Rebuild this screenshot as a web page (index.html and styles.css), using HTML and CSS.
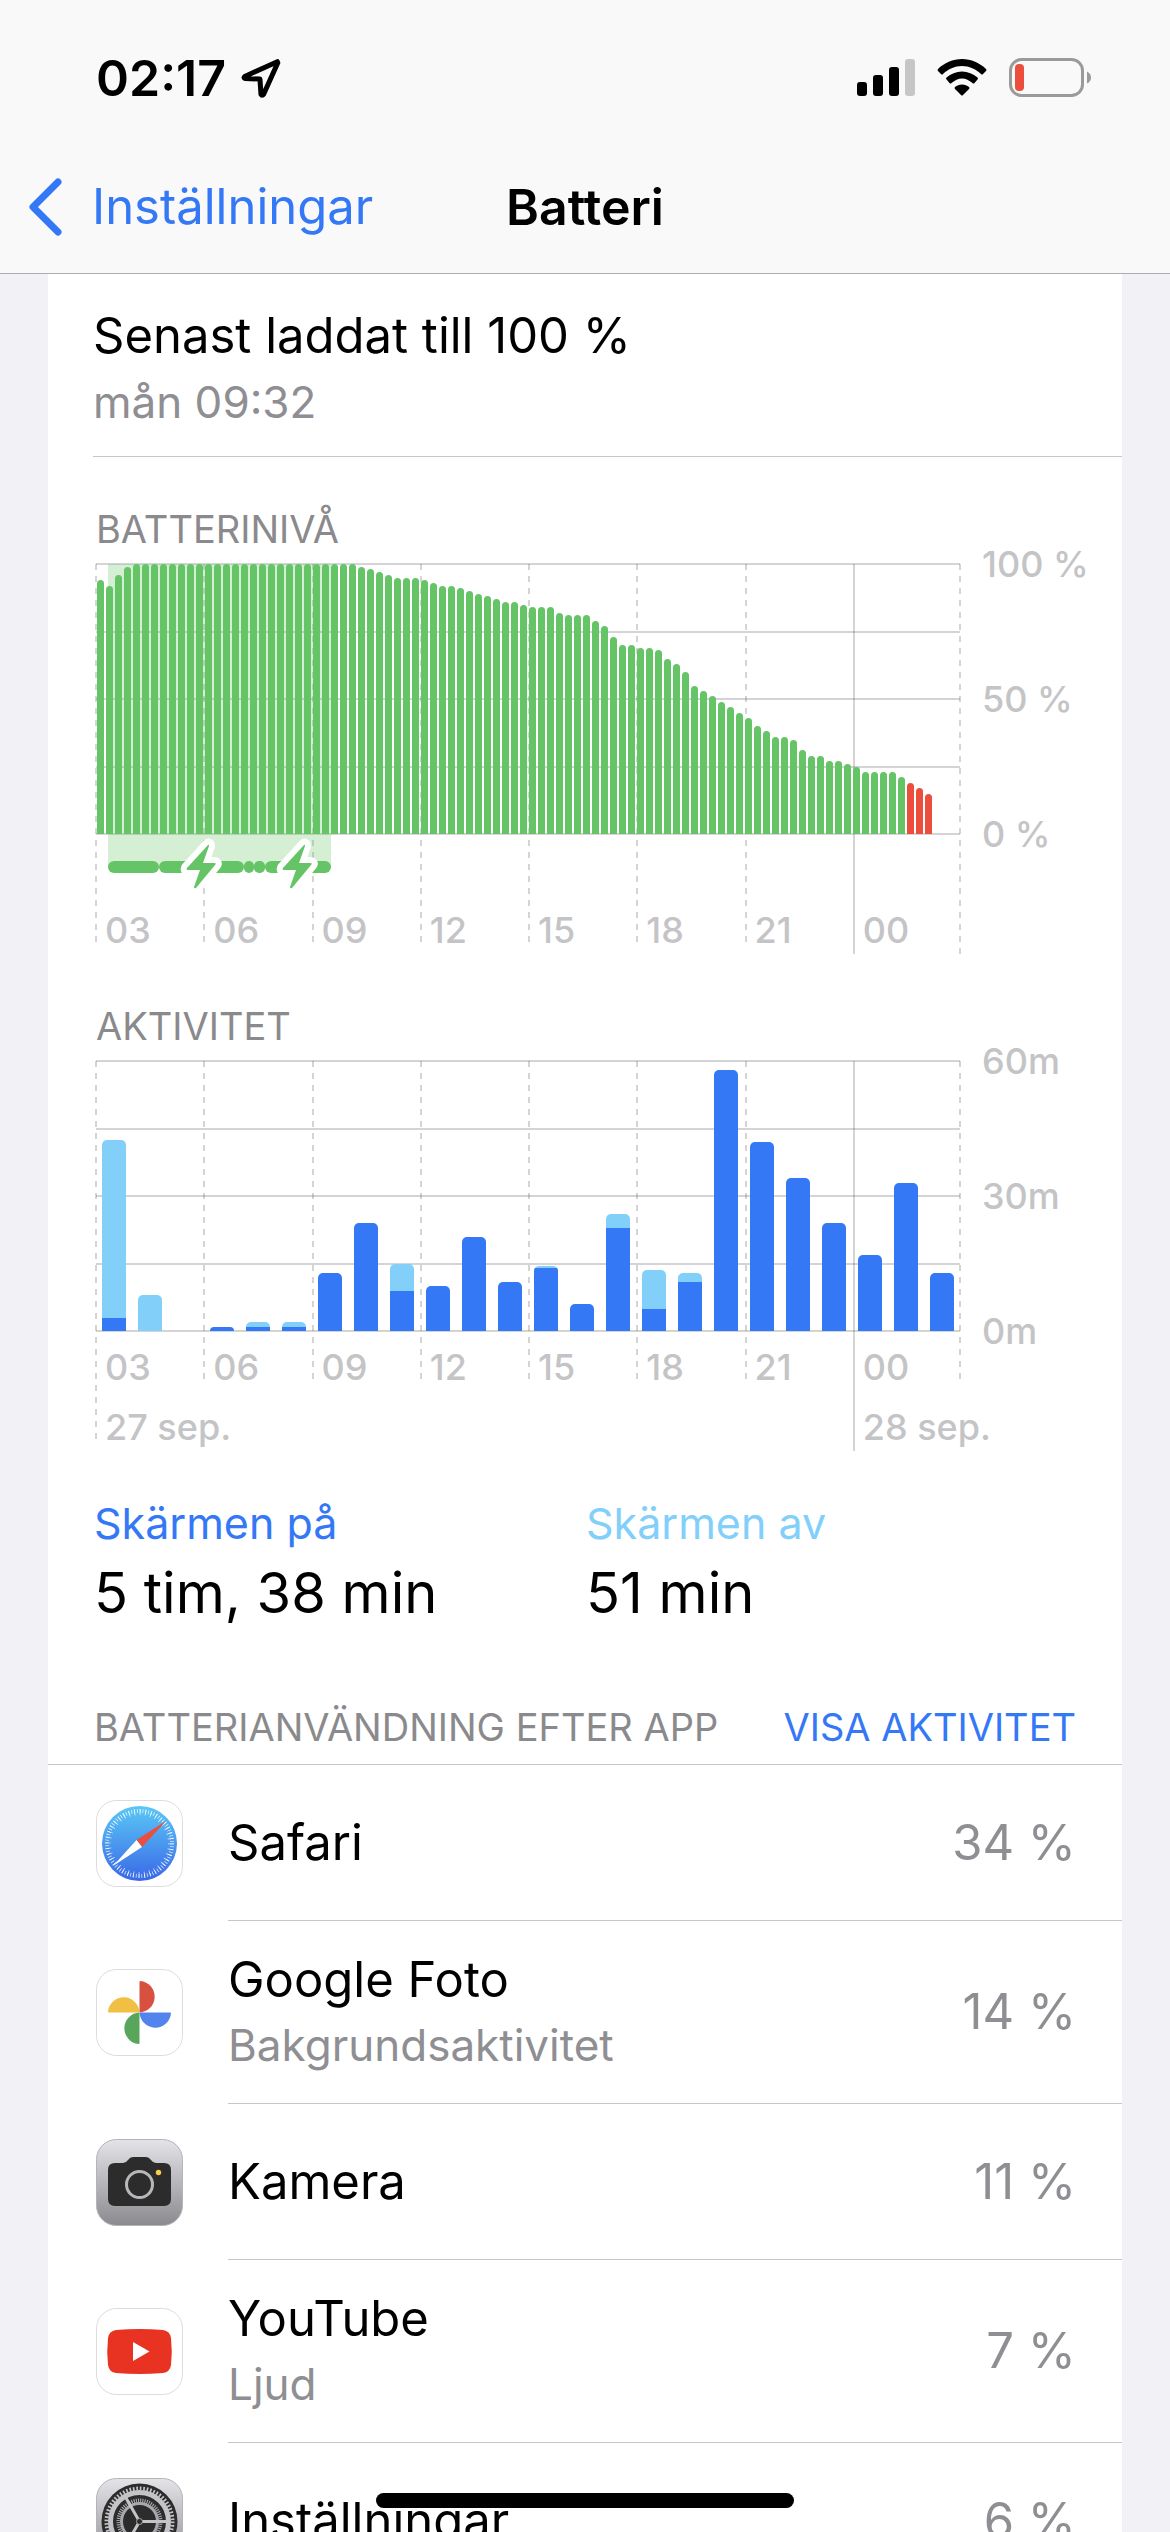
FILE: index.html
```html
<!DOCTYPE html>
<html lang="sv">
<head>
  <meta charset="UTF-8" />
  <meta name="viewport" content="width=device-width, initial-scale=1.0"/>
  <title>Batteri</title>
  <link rel="stylesheet" href="styles.css">
</head>
<body>
  <header class="top">
    <div class="status">
      <div class="status-left">
        <span class="clock">02:17</span>
        <svg class="location" viewBox="0 0 40 40" aria-hidden="true"><path d="M35.500 4.500 L4.500 18.500 Q3 20 5 20.500 L19 21 L20 35.500 Q21 37.500 22.500 35.500 L36 5.500 Z" fill="none" stroke="#000" stroke-width="4.800" stroke-linejoin="round"/></svg>
      </div>
      <div class="status-right">
        <svg class="signal" viewBox="0 0 58 38" aria-hidden="true">
          <rect x="0" y="23" width="10" height="14" rx="3"/>
          <rect x="16" y="16" width="10" height="21" rx="3"/>
          <rect x="32" y="8" width="10" height="29" rx="3"/>
          <rect x="48" y="0" width="10" height="37" rx="3" fill="#c6c6c8"/>
        </svg>
        <svg class="wifi" viewBox="0 0 50 38" aria-hidden="true">
          <path d="M25 0 C34 0 43 4 49 10 Q50 11 49 12 L46 15 Q45 16 44 15 C39 10 32 7 25 7 C18 7 11 10 6 15 Q5 16 4 15 L1 12 Q0 11 1 10 C7 4 16 0 25 0 Z"/>
          <path d="M25 12.500 C31 12.500 36 15 40.500 18.500 Q41.500 19.500 40.500 20.500 L37.500 24 Q36.500 25 35.500 24 C32 21.500 29 19.500 25 19.500 C21 19.500 18 21.500 14.500 24 Q13.500 25 12.500 24 L9.500 20.500 Q8.500 19.500 9.500 18.500 C14 15 19 12.500 25 12.500 Z"/>
          <path d="M25 25.500 C28 25.500 30 26.500 32 28 Q33 29 32 30 L26 36 Q25 37 24 36 L18 30 Q17 29 18 28 C20 26.500 22 25.500 25 25.500 Z"/>
        </svg>
        <svg class="battery" viewBox="0 0 82 40" aria-hidden="true">
          <rect x="1.500" y="1.500" width="72" height="36" rx="11" fill="none" stroke="#9a9a9b" stroke-width="3"/>
          <path d="M78 13.500 Q82 15.500 82 19.500 Q82 23.500 78 25.500 Z" fill="#9a9a9b"/>
          <rect x="6" y="6" width="9" height="27" rx="4" fill="#eb4e3d"/>
        </svg>
      </div>
    </div>
    <nav class="nav">
      <a class="back" href="#">
        <svg viewBox="0 0 34 58" aria-hidden="true"><path d="M30 4 L5 29 L30 54" fill="none" stroke="#3478f6" stroke-width="7" stroke-linecap="round" stroke-linejoin="round"/></svg>
        Inställningar
      </a>
      <h1>Batteri</h1>
    </nav>
  </header>

  <main class="card">
    <section class="last-charge">
      <p class="title">Senast laddat till 100 %</p>
      <p class="sub">mån 09:32</p>
    </section>

    <section class="chart-block">
      <h2>BATTERINIVÅ</h2>
      <div class="chart level">
        <div class="area">
          <div class="grid-lines"><i></i><i></i><i></i><i></i><i></i></div>
          <div class="hours">
            <span>03</span><span>06</span><span>09</span><span>12</span><span>15</span><span>18</span><span>21</span><span class="midnight">00</span>
          </div>
          <div class="charging"></div>
          <div class="bars" id="levelBars"></div>
          <svg class="charge-line" viewBox="0 0 864 60" aria-hidden="true">
            <g fill="#65c466">
              <rect x="12" y="22" width="51" height="12" rx="6"/>
              <rect x="63" y="22" width="85" height="12" rx="6"/>
              <rect x="148" y="22" width="10" height="12" rx="5"/>
              <rect x="158" y="22" width="11" height="12" rx="5"/>
              <rect x="169" y="22" width="66" height="12" rx="6"/>
            </g>
            <g fill="#65c466" stroke-linejoin="round">
              <path id="bolt" d="M112 6 L91 29 Q90 31 92 31 L104 31 L98 48 Q98 50 100 49 L119 26 Q121 24 118 24 L107 24 L113 7 Q113 5 112 6 Z" stroke="#fff" stroke-width="12" paint-order="stroke"/>
              <use href="#bolt" x="96"/>
            </g>
          </svg>
        </div>
        <div class="scale"><span>100 %</span><span>50 %</span><span>0 %</span></div>
      </div>
    </section>

    <section class="chart-block">
      <h2>AKTIVITET</h2>
      <div class="chart activity">
        <div class="area">
          <div class="grid-lines"><i></i><i></i><i></i><i></i><i></i></div>
          <div class="hours">
            <span class="day">03<b>27 sep.</b></span><span>06</span><span>09</span><span>12</span><span>15</span><span>18</span><span>21</span><span class="midnight">00<b>28 sep.</b></span>
          </div>
          <div class="bars" id="activityBars"></div>
        </div>
        <div class="scale"><span>60m</span><span>30m</span><span>0m</span></div>
      </div>
    </section>

    <dl class="totals">
      <div>
        <dt class="on">Skärmen på</dt>
        <dd>5 tim, 38 min</dd>
      </div>
      <div>
        <dt class="off">Skärmen av</dt>
        <dd>51 min</dd>
      </div>
    </dl>

    <div class="list-head">
      <h2>BATTERIANVÄNDNING EFTER APP</h2>
      <button type="button">VISA AKTIVITET</button>
    </div>

    <ul class="apps">
      <li>
        <svg class="icon" viewBox="0 0 87 87" aria-hidden="true">
          <defs>
            <linearGradient id="safariBlue" x1="0" y1="0" x2="0" y2="1"><stop offset="0" stop-color="#5ac8f5"/><stop offset="1" stop-color="#3a68e8"/></linearGradient>
            <linearGradient id="metal" x1="0" y1="0" x2="0" y2="1"><stop offset="0" stop-color="#e4e4e8"/><stop offset="1" stop-color="#8b8a8f"/></linearGradient>
          </defs>
          <rect class="tile" x=".5" y=".5" width="86" height="86" rx="20"/>
          <circle cx="43.500" cy="43.500" r="37.500" fill="url(#safariBlue)"/>
          <circle cx="43.500" cy="43.500" r="32.500" fill="none" stroke="#fff" stroke-opacity=".8" stroke-width="4" stroke-dasharray=".8 2.036"/>
          <circle cx="43.500" cy="43.500" r="31.500" fill="none" stroke="#fff" stroke-opacity=".8" stroke-width="6" stroke-dasharray=".8 4.698"/>
          <path d="M70 21 L40.500 40 L46 47 Z" fill="#eb4e3d"/>
          <path d="M17 66 L40.500 40 L46 47 Z" fill="#fff"/>
        </svg>
        <div class="row">
          <div class="name"><p class="title">Safari</p></div>
          <span class="share">34 %</span>
        </div>
      </li>
      <li>
        <svg class="icon" viewBox="0 0 87 87" aria-hidden="true">
          <rect class="tile" x=".5" y=".5" width="86" height="86" rx="20"/>
          <path d="M43.500 43.500 V13 Q43.500 12 44.500 12 A15.800 15.800 0 0 1 43.500 43.500 Z" fill="#d85140"/>
          <path d="M43.500 43.500 H74 Q75 43.500 75 44.500 A15.800 15.800 0 0 1 43.500 43.500 Z" fill="#5383ec"/>
          <path d="M43.500 43.500 V74 Q43.500 75 42.500 75 A15.800 15.800 0 0 1 43.500 43.500 Z" fill="#58a55c"/>
          <path d="M43.500 43.500 H13 Q12 43.500 12 42.500 A15.800 15.800 0 0 1 43.500 43.500 Z" fill="#f1bf42"/>
        </svg>
        <div class="row tall">
          <div class="name"><p class="title">Google Foto</p><p class="sub">Bakgrundsaktivitet</p></div>
          <span class="share">14 %</span>
        </div>
      </li>
      <li>
        <svg class="icon" viewBox="0 0 87 87" aria-hidden="true">
          <rect class="tile metal" x=".5" y=".5" width="86" height="86" rx="20"/>
          <path d="M12 31 Q12 24 19 24 H27 Q30 24 32 21 Q34 18 37 18 H50 Q53 18 55 21 Q57 24 60 24 H68 Q75 24 75 31 V60 Q75 67 68 67 H19 Q12 67 12 60 Z" fill="#2c2c2c"/>
          <circle cx="43.500" cy="45.500" r="13" fill="none" stroke="#b8b8bb" stroke-width="3"/>
          <circle cx="62.500" cy="33.500" r="2.700" fill="#f7ce46"/>
        </svg>
        <div class="row">
          <div class="name"><p class="title">Kamera</p></div>
          <span class="share">11 %</span>
        </div>
      </li>
      <li>
        <svg class="icon" viewBox="0 0 87 87" aria-hidden="true">
          <rect class="tile" x=".5" y=".5" width="86" height="86" rx="20"/>
          <path d="M20 22 Q43.500 20 67 22 Q74 23 75 30 Q76.500 43.500 75 57 Q74 64 67 65 Q43.500 67 20 65 Q13 64 12 57 Q10.500 43.500 12 30 Q13 23 20 22 Z" fill="#e83323"/>
          <path d="M37 34 L53.500 43.500 L37 53 Z" fill="#fff"/>
        </svg>
        <div class="row tall">
          <div class="name"><p class="title">YouTube</p><p class="sub">Ljud</p></div>
          <span class="share">7 %</span>
        </div>
      </li>
      <li>
        <svg class="icon" viewBox="0 0 87 87" aria-hidden="true">
          <rect class="tile metal" x=".5" y=".5" width="86" height="86" rx="20"/>
          <circle cx="43.500" cy="43.500" r="38" fill="#2c2c2c"/>
          <circle cx="43.500" cy="43.500" r="33" fill="none" stroke="#c4c4c8" stroke-width="4" stroke-dasharray="1.700 1.756"/>
          <circle cx="43.500" cy="43.500" r="29" fill="none" stroke="#c4c4c8" stroke-width="5"/>
          <circle cx="43.500" cy="43.500" r="21" fill="none" stroke="#a8a8ac" stroke-width="4" stroke-dasharray="1.100 1.100"/>
          <circle cx="43.500" cy="43.500" r="18" fill="none" stroke="#a8a8ac" stroke-width="3"/>
          <path d="M43.500 43.500 H71 M43.500 43.500 L30 20 M43.500 43.500 L30 67" stroke="#c4c4c8" stroke-width="3"/>
          <circle cx="43.500" cy="43.500" r="3" fill="#2c2c2c" stroke="#a8a8ac"/>
        </svg>
        <div class="row">
          <div class="name"><p class="title">Inställningar</p></div>
          <span class="share">6 %</span>
        </div>
      </li>
    </ul>
  </main>
  <div class="home-bar"></div>

<script>
  // battery level every 15 minutes, in percent
  const LEVELS = [
    94, 92, 96, 99, 100, 100, 100, 100, 100, 100, 100, 100,
    100, 100, 100, 100, 100, 100, 100, 100, 100, 100, 100, 100,
    100, 100, 100, 100, 100, 99, 98, 97, 96, 95, 95, 95,
    94, 93, 92, 92, 91, 90, 89, 88, 87, 86, 86, 85,
    84, 84, 84, 82, 81, 81, 81, 79, 77, 73, 70, 70,
    69, 69, 68, 65, 63, 60, 55, 53, 51, 49, 47, 45,
    43, 40, 38, 36, 36, 35, 31, 29, 29, 27, 27, 26,
    25, 23, 23, 23, 23, 21, 19, 17, 15, 0, 0, 0
  ];

  // minutes per hour: [screen on, screen off]
  const ACTIVITY = [
    [3, 39.5], [0, 8], [0, 0], [1, 0], [1, 1], [1, 1],
    [13, 0], [24, 0], [9, 6], [10, 0], [21, 0], [11, 0],
    [14, 0.5], [6, 0], [23, 3], [5, 8.5], [11, 2], [58, 0],
    [42, 0], [34, 0], [24, 0], [17, 0], [33, 0], [13, 0]
  ];

  const levelBars = document.getElementById("levelBars");
  LEVELS.forEach(level => {
    const bar = document.createElement("div");
    bar.className = level < 20 ? "bar low" : "bar";
    bar.style.height = level + "%";
    levelBars.appendChild(bar);
  });

  const activityBars = document.getElementById("activityBars");
  ACTIVITY.forEach(([on, off]) => {
    const bar = document.createElement("div");
    bar.className = "bar";
    bar.style.height = (on + off) / 60 * 100 + "%";
    const screenOn = document.createElement("div");
    screenOn.className = "screen-on";
    screenOn.style.height = (on + off ? on / (on + off) * 100 : 0) + "%";
    bar.appendChild(screenOn);
    activityBars.appendChild(bar);
  });
</script>
</body>
</html>
```

FILE: styles.css
```css
:root {
  --blue: #3478f6;
  --light-blue: #82cffa;
  --green: #65c466;
  --red: #eb4e3d;
  --gray: #8e8e93;
  --axis: #c4c4c6;
  --line: #c6c6c8;
  --grid: rgba(60, 60, 67, 0.22);
}

* {
  box-sizing: border-box;
}

body {
  margin: 0;
  background: #f2f1f6;
  color: #000;
  font-family: Inter, "Liberation Sans", sans-serif;
  font-size: 49px;
  line-height: 60px;
  height: 100vh;
  display: flex;
  flex-direction: column;
  overflow: hidden;
}

h1, h2, p, ul, dl, dd {
  margin: 0;
  padding: 0;
}

.top {
  flex: none;
  background: #f9f9f9;
  border-bottom: 1px solid #adadaf;
}

.status {
  display: flex;
  justify-content: space-between;
  align-items: center;
  padding: 48px 79px 0 96px;
}

.status-left, .status-right {
  display: flex;
  align-items: center;
  gap: 14px;
}

.clock {
  font-size: 50px;
  font-weight: 600;
}

.location { width: 42px; height: 42px; }
.signal { width: 58px; height: 38px; }
.wifi { width: 50px; height: 38px; margin-left: 8px; }
.battery { width: 82px; height: 40px; margin-left: 8px; }

.nav {
  display: grid;
  grid-template-columns: 1fr auto 1fr;
  align-items: center;
  padding: 69px 28px 36px;
}

.back {
  display: flex;
  align-items: center;
  gap: 30px;
  color: var(--blue);
  text-decoration: none;
}

.back svg {
  width: 34px;
  height: 58px;
}

h1 {
  font-size: 50px;
  font-weight: 600;
}

.card {
  flex: none;
  margin: 0 48px;
  background: #fff;
}

.sub {
  color: var(--gray);
  font-size: 44px;
}

.last-charge {
  margin-left: 45px;
  padding: 32px 0 24px;
  border-bottom: 1px solid var(--line);
}

.last-charge .title {
  margin-bottom: 6px;
}

h2 {
  color: #8a8a8d;
  font-size: 38px;
  font-weight: 400;
  line-height: 48px;
}

.chart-block {
  padding: 48px 0 0 48px;
}

.chart {
  display: flex;
  margin-top: 11px;
}

.area {
  position: relative;
  flex: 1;
  height: 390px;
}

.scale {
  width: 162px;
  height: 270px;
  padding-left: 22px;
  display: flex;
  flex-direction: column;
  justify-content: space-between;
}

.scale span {
  line-height: 44px;
  margin: -22px 0;
}

.scale span, .hours span {
  color: var(--axis);
  font-size: 36px;
  font-weight: 500;
}

/* grid behind the bars */
.grid-lines, .hours {
  position: absolute;
  inset: 0;
}

.grid-lines {
  height: 272px;
  top: -1px;
  display: flex;
  flex-direction: column;
  justify-content: space-between;
}

.grid-lines i {
  height: 2px;
  background: var(--grid);
}

.hours {
  display: grid;
  grid-template-columns: repeat(8, minmax(0, 1fr));
  align-items: start;
  margin: 0 -1px;
}

.hours span {
  padding: 344px 0 0 10px;
  height: 384px;
  line-height: 44px;
  background: repeating-linear-gradient(var(--grid) 0 6px, transparent 6px 12px) left / 2px 100% no-repeat;
}

.hours span:last-child {
  background:
    linear-gradient(var(--grid), var(--grid)) left / 2px 100% no-repeat,
    repeating-linear-gradient(var(--grid) 0 6px, transparent 6px 12px) right / 2px 100% no-repeat;
}

.hours .midnight {
  height: 390px;
}

.activity .hours span {
  padding-top: 284px;
  height: 324px;
}

.activity .hours .day { height: 384px; }

.activity .hours .midnight {
  height: 390px;
  background:
    linear-gradient(var(--grid), var(--grid)) left / 2px 100% no-repeat,
    repeating-linear-gradient(var(--grid) 0 6px, transparent 6px 12px) right top / 2px 324px no-repeat;
}

.hours b {
  display: block;
  margin-top: 16px;
  font-weight: 500;
  white-space: nowrap;
}

.bars {
  position: relative;
  height: 270px;
  display: flex;
  align-items: flex-end;
}

.bar {
  flex: 1;
}

.level .bar {
  margin: 0 1px;
  border-radius: 4px 4px 0 0;
  background: var(--green);
}

.level .bar.low {
  background: var(--red);
}

.activity .bar {
  display: flex;
  align-items: flex-end;
  margin: 0 6px;
  border-radius: 5px 5px 0 0;
  background: var(--light-blue);
  overflow: hidden;
}

.screen-on {
  width: 100%;
  background: var(--blue);
}

.charging {
  position: absolute;
  top: 0;
  left: 1.4%;
  width: 25.8%;
  height: 303px;
  background: rgba(101, 196, 102, 0.28);
}

.charge-line {
  position: absolute;
  top: 275px;
  left: 0;
  width: 100%;
  overflow: visible;
}

.totals {
  display: grid;
  grid-template-columns: 492px 1fr;
  padding: 42px 46px 0;
}

.totals dt {
  font-size: 43px;
}

.totals .on { color: var(--blue); }
.totals .off { color: var(--light-blue); }

.totals dd {
  margin-top: 4px;
  font-size: 56px;
  line-height: 72px;
}

.list-head {
  display: flex;
  justify-content: space-between;
  padding: 74px 46px 13px;
  border-bottom: 1px solid var(--line);
}

.list-head button {
  padding: 0;
  border: none;
  background: none;
  color: var(--blue);
  font: inherit;
  font-size: 38px;
  line-height: 48px;
}

.apps {
  list-style: none;
}

.apps li {
  display: flex;
  align-items: center;
  padding-left: 48px;
}

.icon {
  flex: none;
  width: 87px;
  height: 87px;
  margin-right: 45px;
}

.tile {
  fill: #fff;
  stroke: #dcdcde;
}

.tile.metal {
  fill: url(#metal);
  stroke: #b4b4b8;
}

.row {
  flex: 1;
  display: flex;
  align-items: center;
  justify-content: space-between;
  height: 156px;
  padding-right: 46px;
  border-bottom: 1px solid var(--line);
}

.row.tall {
  height: 183px;
}

.tall .sub {
  margin-top: 5px;
}

.share {
  color: var(--gray);
}

.home-bar {
  position: fixed;
  left: 50%;
  bottom: 24px;
  width: 418px;
  height: 15px;
  border-radius: 8px;
  background: #000;
  transform: translateX(-50%);
}
```
